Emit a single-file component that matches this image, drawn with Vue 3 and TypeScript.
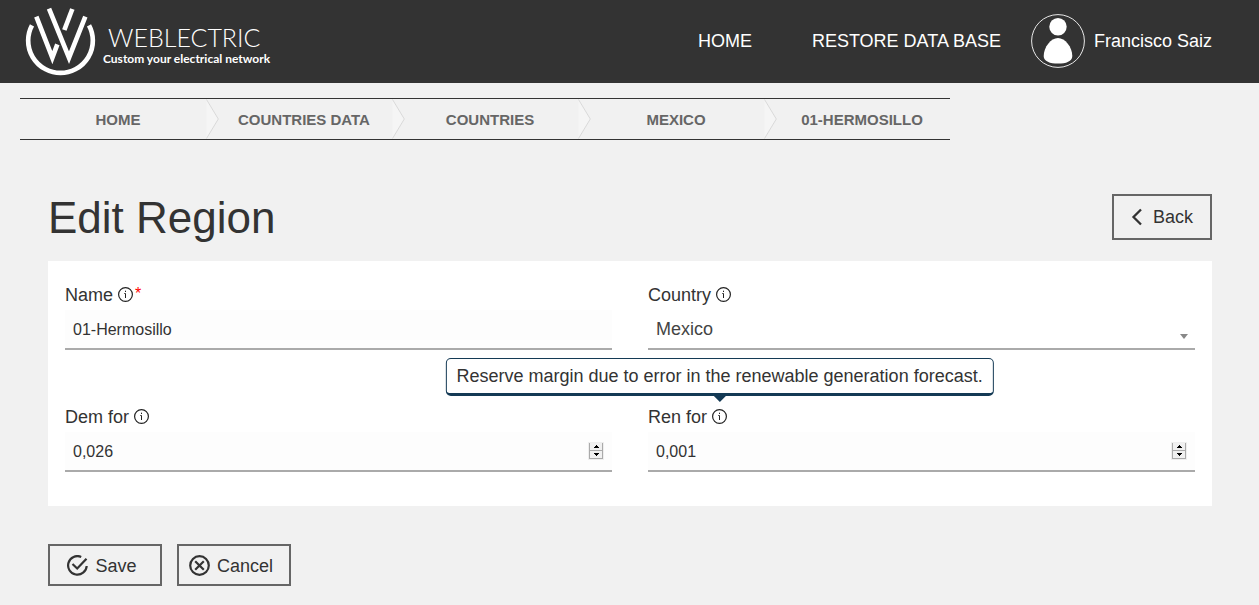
<script setup lang="ts">
import { ref } from 'vue'

const crumbs: string[] = ['Home', 'Countries Data', 'Countries', 'Mexico', '01-Hermosillo']
const name = ref('01-Hermosillo')
const country = ref('Mexico')
const demFor = ref('0,026')
const renFor = ref('0,001')

function step(value: string, delta: number): string {
  const next = Math.max(0, Number(value.replace(',', '.')) + delta)
  return next.toFixed(3).replace('.', ',')
}
</script>

<template>
  <div class="page">
    <header class="topbar">
      <a class="brand" href="#">
        <svg class="brand-mark" viewBox="15 14 216 216" aria-hidden="true">
          <g fill="none" stroke="#fff" stroke-width="14">
            <path d="M36 75A97 97 0 1 0 207 75" />
            <path d="M49 49L97 172L112 132" />
            <path d="M87 25L147 172L196 49" />
            <path d="M157 26L133 89" />
          </g>
        </svg>
        <span class="brand-text">
          <span class="brand-name">WEBLECTRIC</span>
          <span class="brand-tag">Custom your electrical network</span>
        </span>
      </a>
      <nav class="menu">
        <a href="#">HOME</a>
        <a href="#">RESTORE DATA BASE</a>
      </nav>
      <a class="user" href="#">
        <svg class="avatar" viewBox="0 0 54 54" aria-hidden="true">
          <circle cx="27" cy="27" r="26.4" fill="none" stroke="#e8e8e8" stroke-width="1" />
          <ellipse cx="27" cy="12.7" rx="8.7" ry="8.8" fill="#fff" />
          <path d="M27 24C34 24 41.3 33 41.3 42C41.3 47.500 35 49.600 27 49.600S12.700 47.500 12.700 42C12.700 33 20 24 27 24Z" fill="#fff" />
        </svg>
        <span>Francisco Saiz</span>
      </a>
    </header>

    <nav class="crumbs" aria-label="Breadcrumb">
      <a v-for="(crumb, i) in crumbs" :key="crumb" class="crumb" href="#">
        <span>{{ crumb }}</span>
        <svg v-if="i < crumbs.length - 1" class="chevron" viewBox="0 0 13 40" aria-hidden="true">
          <path d="M0.500 0.500L12.300 20L0.500 39.500" fill="#f5f5f5" stroke="#d9d9d9" />
        </svg>
      </a>
    </nav>

    <main class="content">
      <div class="title-row">
        <h1>Edit Region</h1>
        <button class="btn back" type="button">
          <svg class="back-icon" viewBox="0 0 12 18" aria-hidden="true">
            <path d="M10 1.500L2.500 9L10 16.500" fill="none" stroke="#333" stroke-width="2.300" />
          </svg>
          Back
        </button>
      </div>

      <form id="region" class="card" @submit.prevent>
        <div class="field">
          <div class="label">
            <label for="name">Name</label>
            <svg class="info" viewBox="0 0 15 15" aria-hidden="true">
              <circle cx="7.500" cy="7.500" r="6.900" fill="none" stroke="#222" stroke-width="1.200" />
              <path d="M6.300 6.500H7.500V11M7.500 3.700V5" fill="none" stroke="#222" />
            </svg>
            <span class="required">*</span>
          </div>
          <input id="name" v-model="name" class="control" type="text" required />
        </div>

        <div class="field">
          <div class="label">
            <label for="country">Country</label>
            <svg class="info" viewBox="0 0 15 15" aria-hidden="true">
              <circle cx="7.500" cy="7.500" r="6.900" fill="none" stroke="#222" stroke-width="1.200" />
              <path d="M6.300 6.500H7.500V11M7.500 3.700V5" fill="none" stroke="#222" />
            </svg>
          </div>
          <div class="select-box">
            <select id="country" v-model="country" class="control select">
              <option>Mexico</option>
            </select>
            <svg class="caret" viewBox="0 0 8 5" aria-hidden="true"><path d="M0 0H8L4 5Z" fill="#888" /></svg>
          </div>
        </div>

        <div class="field">
          <div class="label">
            <label for="dem">Dem for</label>
            <svg class="info" viewBox="0 0 15 15" aria-hidden="true">
              <circle cx="7.500" cy="7.500" r="6.900" fill="none" stroke="#222" stroke-width="1.200" />
              <path d="M6.300 6.500H7.500V11M7.500 3.700V5" fill="none" stroke="#222" />
            </svg>
          </div>
          <div class="number-box">
            <input id="dem" v-model="demFor" class="number" type="text" inputmode="decimal" />
            <span class="spinner">
              <button type="button" aria-label="Increase Dem for" @click="demFor = step(demFor, 0.001)">
                <svg viewBox="0 0 5 3"><path d="M2 0H3V1H4V2H5V3H0V2H1V1H2Z" /></svg>
              </button>
              <button type="button" aria-label="Decrease Dem for" @click="demFor = step(demFor, -0.001)">
                <svg viewBox="0 0 5 3"><path d="M0 0H5V1H4V2H3V3H2V2H1V1H0Z" /></svg>
              </button>
            </span>
          </div>
        </div>

        <div class="field">
          <div class="label">
            <label for="ren">Ren for</label>
            <span class="info-anchor">
              <svg class="info" viewBox="0 0 15 15" aria-hidden="true">
                <circle cx="7.500" cy="7.500" r="6.900" fill="none" stroke="#222" stroke-width="1.200" />
                <path d="M6.300 6.500H7.500V11M7.500 3.700V5" fill="none" stroke="#222" />
              </svg>
              <span id="ren-help" class="tooltip" role="tooltip">Reserve margin due to error in the renewable generation forecast.</span>
            </span>
          </div>
          <div class="number-box">
            <input id="ren" v-model="renFor" class="number" type="text" inputmode="decimal" aria-describedby="ren-help" />
            <span class="spinner">
              <button type="button" aria-label="Increase Ren for" @click="renFor = step(renFor, 0.001)">
                <svg viewBox="0 0 5 3"><path d="M2 0H3V1H4V2H5V3H0V2H1V1H2Z" /></svg>
              </button>
              <button type="button" aria-label="Decrease Ren for" @click="renFor = step(renFor, -0.001)">
                <svg viewBox="0 0 5 3"><path d="M0 0H5V1H4V2H3V3H2V2H1V1H0Z" /></svg>
              </button>
            </span>
          </div>
        </div>
      </form>

      <div class="actions">
        <button class="btn action" type="submit" form="region">
          <svg class="action-icon" viewBox="0 0 21 21" aria-hidden="true">
            <g fill="none" stroke="#333" stroke-width="2.200">
              <path d="M14.200 1.900A9.300 9.300 0 1 0 19.700 11" />
              <path d="M5.500 9L10.200 13.500L19.500 3.800" />
            </g>
          </svg>
          <span>Save</span>
        </button>
        <button class="btn action" type="button">
          <svg class="action-icon" viewBox="0 0 21 21" aria-hidden="true">
            <g fill="none" stroke="#333" stroke-width="2.200">
              <circle cx="10.500" cy="10.500" r="9.300" />
              <path d="M6.200 6.200L14.800 14.800M14.800 6.200L6.200 14.800" />
            </g>
          </svg>
          <span>Cancel</span>
        </button>
      </div>
    </main>
  </div>
</template>

<style>
body {
  margin: 0;
  background: #f1f1f1;
}
</style>

<style scoped>
.page {
  min-height: 100vh;
  background: #f1f1f1;
  color: #333;
  font-family: "Liberation Sans", Arial, sans-serif;
  font-size: 18px;
  line-height: 22px;
}
.page *,
.page *::after {
  box-sizing: border-box;
}
a {
  color: inherit;
  text-decoration: none;
}
svg {
  display: block;
  flex: none;
}
.topbar {
  display: flex;
  align-items: center;
  height: 83px;
  padding: 0 47px 2px 25px;
  background: #333;
  color: #fff;
}
.brand {
  display: flex;
  align-items: center;
  gap: 6px;
  margin-right: auto;
}
.brand-mark {
  width: 72px;
  height: 72px;
}
.brand-text {
  display: flex;
  flex-direction: column;
  padding-top: 6px;
  white-space: nowrap;
}
.brand-name {
  padding-left: 5px;
  font-family: Lato, sans-serif;
  font-size: 25px;
  font-weight: 300;
  line-height: 30px;
}
.brand-tag {
  font-family: Lato, sans-serif;
  font-size: 12px;
  font-weight: 700;
  line-height: 14px;
}
.menu {
  display: flex;
  gap: 60px;
  margin-right: 30px;
}
.user {
  display: flex;
  align-items: center;
  gap: 9px;
}
.avatar {
  width: 54px;
  height: 54px;
}
.crumbs {
  display: grid;
  grid-template-columns: repeat(5, 1fr);
  max-width: 930px;
  height: 42px;
  margin: 15px 20px 0;
  border-top: 1px solid #333;
  border-bottom: 1px solid #333;
}
.crumb {
  position: relative;
  display: flex;
  align-items: center;
  justify-content: center;
  padding: 2px 0 0 10px;
  color: #666;
  font-size: 15px;
  font-weight: 700;
  text-transform: uppercase;
  white-space: nowrap;
}
.chevron {
  position: absolute;
  top: 0;
  left: 100%;
  width: 13px;
  height: 40px;
}
.content {
  padding: 54px 47px 19px 48px;
}
.title-row {
  display: flex;
  align-items: flex-start;
  justify-content: space-between;
  margin-bottom: 19px;
}
h1 {
  margin: 0;
  font-size: 44px;
  font-weight: 400;
  line-height: 48px;
}
.btn {
  display: flex;
  align-items: center;
  border: 2px solid #666;
  background: transparent;
  color: #333;
  font-family: inherit;
  font-size: 18px;
  line-height: 22px;
}
.back {
  gap: 10px;
  height: 46px;
  padding: 0 17px;
}
.back-icon {
  width: 12px;
  height: 18px;
}
.card {
  display: grid;
  grid-template-columns: 1fr 1fr;
  gap: 55px 36px;
  padding: 22px 17px 34px;
  background: #fff;
}
.field {
  min-width: 0;
}
.label {
  display: flex;
  align-items: center;
  height: 22px;
  margin-bottom: 5px;
}
.label label {
  padding-top: 2px;
}
.info {
  width: 15px;
  height: 15px;
  margin-left: 5px;
}
.required {
  margin-left: 2px;
  color: #f00;
  font-size: 16px;
}
.control,
.number-box {
  display: block;
  width: 100%;
  height: 40px;
  border: 0;
  border-bottom: 2px solid #aaa;
  border-radius: 0;
  background: #fdfdfd;
}
.control,
.number {
  padding: 2px 8px 0;
  color: #333;
  font-family: inherit;
  font-size: 16px;
  outline: none;
}
.select-box {
  position: relative;
}
.select {
  padding-top: 0;
  appearance: none;
  background: #fff;
  color: #444;
  font-size: 18px;
}
.caret {
  position: absolute;
  right: 7px;
  bottom: 11px;
  width: 8px;
  height: 5px;
  pointer-events: none;
}
.number-box {
  display: flex;
  align-items: center;
  padding-right: 8px;
}
.number {
  flex: 1;
  min-width: 0;
  height: 100%;
  border: 0;
  background: transparent;
}
.spinner {
  display: flex;
  flex-direction: column;
  width: 16px;
  height: 18px;
  border: 1px solid #eee;
}
.spinner button {
  display: flex;
  flex: 1;
  align-items: center;
  justify-content: center;
  padding: 0;
  border: 1px solid #aaa;
  border-top: 0;
  background: #f0f0f0;
}
.spinner svg {
  width: 5px;
  height: 3px;
}
.info-anchor {
  position: relative;
  margin-left: 5px;
}
.info-anchor .info {
  margin-left: 0;
}
.tooltip {
  position: absolute;
  bottom: 28px;
  left: 50%;
  z-index: 1;
  padding: 6px 10px;
  border: 1px solid #143a55;
  border-bottom-width: 3px;
  border-radius: 5px;
  background: #fff;
  line-height: 22px;
  white-space: nowrap;
  transform: translateX(-50%);
}
.tooltip::after {
  content: "";
  position: absolute;
  top: 100%;
  left: 50%;
  margin: 2px 0 0 -7px;
  border: 7px solid transparent;
  border-top-color: #143a55;
  border-bottom: 0;
}
.actions {
  display: flex;
  gap: 15px;
  margin-top: 38px;
}
.action {
  justify-content: center;
  gap: 7px;
  width: 114px;
  height: 42px;
  padding: 0 6px 0 0;
}
.action span {
  padding-top: 2px;
}
.action-icon {
  width: 21px;
  height: 21px;
}
</style>
